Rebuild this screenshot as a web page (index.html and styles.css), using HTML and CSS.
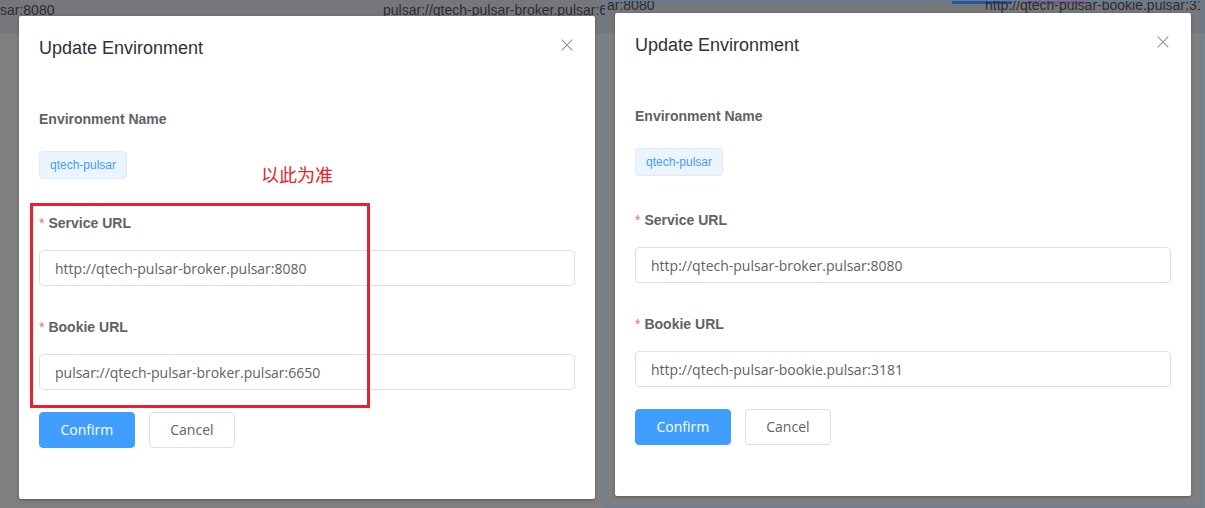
FILE: index.html
```html
<!DOCTYPE html>
<html lang="en">
<head>
<meta charset="utf-8">
<title>Update Environment</title>
<link rel="stylesheet" href="styles.css">
</head>
<body>
<div class="shot shot-left">
  <div class="page-strip strip-left">
    <span class="strip-text">sar:8080</span>
    <span class="strip-text">pulsar://qtech-pulsar-broker.pulsar:6650</span>
  </div>
  <div class="dialog">
    <div class="dialog-header">
      <span class="dialog-title">Update Environment</span>
      <svg class="dialog-close" width="16" height="16" viewBox="0 0 16 16"><path d="M2.7 2.7L13.3 13.3M13.3 2.7L2.7 13.3" stroke="#909399" stroke-width="1.1" fill="none"/></svg>
    </div>
    <div class="dialog-body">
      <div class="form-item item-name">
        <div class="form-label">Environment Name</div>
        <div class="form-content"><span class="tag">qtech-pulsar</span></div>
      </div>
      <div class="form-item item-url">
        <div class="form-label"><span class="req">*</span>Service URL</div>
        <div class="form-content"><input class="input" type="text" readonly value="http://qtech-pulsar-broker.pulsar:8080"></div>
      </div>
      <div class="form-item item-last">
        <div class="form-label"><span class="req">*</span>Bookie URL</div>
        <div class="form-content"><input class="input" type="text" readonly value="pulsar://qtech-pulsar-broker.pulsar:6650"></div>
      </div>
      <div class="actions">
        <button class="btn btn-primary" type="button">Confirm</button>
        <button class="btn" type="button">Cancel</button>
      </div>
    </div>
  </div>
  <div class="note-box"></div>
  <div class="note-text">以此为准</div>
</div>
<div class="shot shot-right">
  <div class="page-strip strip-right">
    <span class="strip-text">ar:8080</span>
    <span class="strip-text">http://qtech-pulsar-bookie.pulsar:3181</span>
  </div>
  <div class="dialog">
    <div class="dialog-header">
      <span class="dialog-title">Update Environment</span>
      <svg class="dialog-close" width="16" height="16" viewBox="0 0 16 16"><path d="M2.7 2.7L13.3 13.3M13.3 2.7L2.7 13.3" stroke="#909399" stroke-width="1.1" fill="none"/></svg>
    </div>
    <div class="dialog-body">
      <div class="form-item item-name">
        <div class="form-label">Environment Name</div>
        <div class="form-content"><span class="tag">qtech-pulsar</span></div>
      </div>
      <div class="form-item item-url">
        <div class="form-label"><span class="req">*</span>Service URL</div>
        <div class="form-content"><input class="input" type="text" readonly value="http://qtech-pulsar-broker.pulsar:8080"></div>
      </div>
      <div class="form-item item-last">
        <div class="form-label"><span class="req">*</span>Bookie URL</div>
        <div class="form-content"><input class="input" type="text" readonly value="http://qtech-pulsar-bookie.pulsar:3181"></div>
      </div>
      <div class="actions">
        <button class="btn btn-primary" type="button">Confirm</button>
        <button class="btn" type="button">Cancel</button>
      </div>
    </div>
  </div>
</div>
</body>
</html>
```

FILE: styles.css
```css
* { box-sizing: border-box; }

html, body {
  margin: 0;
  padding: 0;
}

body {
  width: 1205px;
  height: 508px;
  overflow: hidden;
  display: flex;
  align-items: flex-start;
  font-family: "Liberation Sans", Arial, sans-serif;
  background: linear-gradient(#76777b 0, #76777b 34px, #7f7f7f 34px, #7f7f7f 100%);
}

.shot {
  flex-shrink: 0;
  height: 508px;
  overflow: hidden;
}

.shot-left {
  position: relative;
  width: 605px;
  background: linear-gradient(#76777b 0, #76777b 34px, #7f7f7f 34px, #7f7f7f 100%);
}

.shot-right {
  width: 596px;
  border: 1px solid #5b7fb0;
  background: linear-gradient(#76777b 0, #76777b 32px, #7f7f7f 32px, #7f7f7f 100%);
}

.page-strip {
  display: grid;
  overflow: hidden;
  white-space: nowrap;
  font-size: 14px;
  color: #2c2d31;
}

.strip-left {
  height: 16px;
  line-height: 20px;
  grid-template-columns: 383px minmax(0, 1fr);
}

.strip-right {
  height: 12px;
  line-height: 9px;
  padding-left: 1px;
  grid-template-columns: 378px minmax(0, 1fr);
  background:
    linear-gradient(#2c5793, #2c5793) 346px 0 / 60px 3px no-repeat,
    linear-gradient(#84557a, #84557a) 421px 0 / 59px 3px no-repeat;
}

.strip-text {
  overflow: hidden;
}

.dialog {
  width: 576px;
  height: 483px;
  background: #fff;
  border-radius: 2px;
  box-shadow: 0 1px 3px rgba(0, 0, 0, 0.3);
}

.shot-left .dialog {
  margin-left: 19px;
}

.shot-right .dialog {
  margin-left: 9px;
}

.dialog-header {
  display: flex;
  justify-content: space-between;
  align-items: flex-start;
  padding: 20px 20px 10px;
}

.dialog-title {
  font-size: 18px;
  line-height: 24px;
  color: #303133;
}

.dialog-close {
  display: block;
  margin-top: 1px;
}

.dialog-body {
  padding: 29px 20px 0;
}

.form-label {
  height: 40px;
  line-height: 40px;
  font-size: 14px;
  font-weight: bold;
  color: #606266;
}

.req {
  color: #f56c6c;
  font-weight: normal;
  margin-right: 4px;
}

.item-name {
  margin-bottom: 24px;
}

.item-name .form-content {
  margin-top: 12px;
  height: 28px;
}

.item-url {
  margin-bottom: 21px;
}

.item-last {
  margin-bottom: 22px;
}

.item-url .form-content,
.item-last .form-content {
  margin-top: 7px;
}

.tag {
  display: inline-block;
  height: 28px;
  line-height: 26px;
  padding: 0 10px;
  font-size: 12px;
  color: #409eff;
  background: #ecf5ff;
  border: 1px solid #d9ecff;
  border-radius: 4px;
}

.input {
  display: block;
  width: 100%;
  height: 36px;
  margin: 0;
  padding: 0 15px;
  font-family: "Open Sans", "Liberation Sans", sans-serif;
  font-size: 14px;
  line-height: 34px;
  color: #606266;
  background: #fff;
  border: 1px solid #dcdfe6;
  border-radius: 4px;
  outline: none;
}

.actions {
  display: flex;
  gap: 14px;
}

.btn {
  height: 36px;
  margin: 0;
  padding: 0 20.5px;
  font-family: "Open Sans", "Liberation Sans", sans-serif;
  font-size: 14px;
  line-height: 34px;
  color: #606266;
  background: #fff;
  border: 1px solid #dcdfe6;
  border-radius: 4px;
}

.btn-primary {
  color: #fff;
  background: #409eff;
  border-color: #409eff;
}

.note-box {
  position: absolute;
  left: 30px;
  top: 203px;
  width: 340px;
  height: 205px;
  border: 3px solid #e8212a;
}

.note-text {
  position: absolute;
  left: 261px;
  top: 164px;
  font-family: "Noto Sans CJK SC", sans-serif;
  font-size: 18px;
  line-height: 20px;
  color: #e8212a;
}
```
